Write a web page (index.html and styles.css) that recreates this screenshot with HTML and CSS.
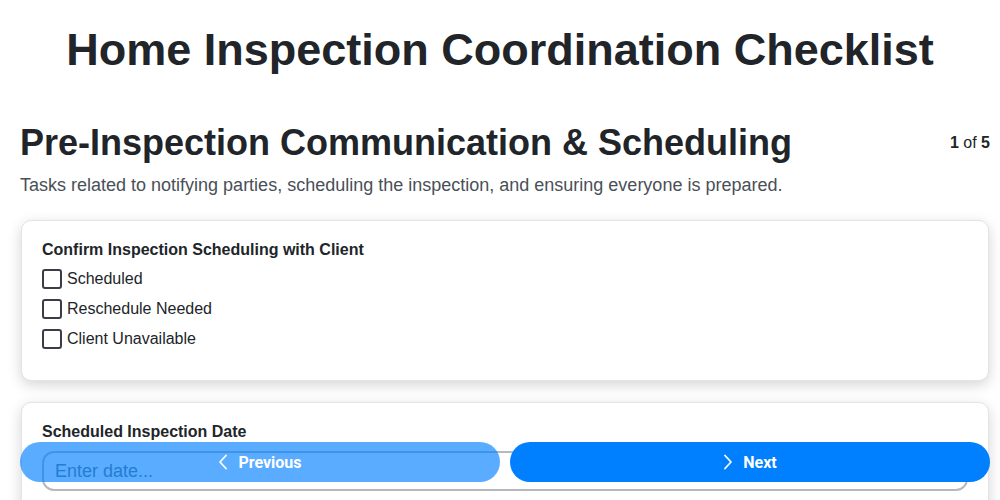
FILE: index.html
```html
<!DOCTYPE html>
<html lang="en">
<head>
<meta charset="utf-8">
<title>Home Inspection Coordination Checklist</title>
<link rel="stylesheet" href="styles.css">
</head>
<body>
<main class="page">
  <h1 class="page-title">Home Inspection Coordination Checklist</h1>
  <section class="section">
    <div class="section-head">
      <h2 class="section-title">Pre-Inspection Communication &amp; Scheduling</h2>
      <div class="step"><b>1</b> of <b>5</b></div>
    </div>
    <p class="section-desc">Tasks related to notifying parties, scheduling the inspection, and ensuring everyone is prepared.</p>

    <div class="card">
      <div class="card-label">Confirm Inspection Scheduling with Client</div>
      <label class="option"><span class="box"></span>Scheduled</label>
      <label class="option"><span class="box"></span>Reschedule Needed</label>
      <label class="option"><span class="box"></span>Client Unavailable</label>
    </div>

    <div class="card">
      <div class="card-label">Scheduled Inspection Date</div>
      <input class="text-input" type="text" placeholder="Enter date...">
    </div>
  </section>
</main>
<nav class="pager">
  <button class="btn btn-prev" type="button">
    <svg width="10" height="16" viewBox="0 0 10 16"><path d="M8 1.5 L2 8 L8 14.5" fill="none" stroke="currentColor" stroke-width="1.8" stroke-linecap="round" stroke-linejoin="round"/></svg>
    Previous
  </button>
  <button class="btn btn-next" type="button">
    <svg width="10" height="16" viewBox="0 0 10 16"><path d="M2 1.5 L8 8 L2 14.5" fill="none" stroke="currentColor" stroke-width="1.8" stroke-linecap="round" stroke-linejoin="round"/></svg>
    Next
  </button>
</nav>
</body>
</html>
```
FILE: styles.css
```css
* { box-sizing: border-box; }
body {
  margin: 0;
  background: #fff;
  color: #212529;
  font-family: "Liberation Sans", Arial, sans-serif;
}
.page {
  padding: 0 10px 0 20px;
}
.page-title {
  margin: 21px 10px 0 0;
  font-size: 45px;
  line-height: 58px;
  font-weight: 700;
  text-align: center;
}
.section-head {
  margin-top: 42px;
  display: flex;
  align-items: center;
  justify-content: space-between;
}
.section-title {
  margin: 0;
  font-size: 36px;
  line-height: 43px;
  font-weight: 700;
}
.step {
  font-size: 16px;
  color: #212529;
}
.section-desc {
  margin: 8px 0 21px;
  font-size: 18px;
  line-height: 27px;
  color: #495057;
}
.card {
  border: 1px solid #e3e3e8;
  border-radius: 10px;
  padding: 17px 20px 26px;
  margin: 0 1px 21px;
  background: #fff;
  box-shadow: 0 4px 14px rgba(0, 0, 0, 0.17);
}
.card-label {
  font-size: 16px;
  line-height: 24px;
  font-weight: 700;
  margin-bottom: 2px;
}
.option {
  display: flex;
  align-items: center;
  gap: 5px;
  height: 30px;
  font-size: 16px;
}
.box {
  width: 20px;
  height: 20px;
  border: 2px solid #3c3c48;
  border-radius: 3px;
}
.text-input {
  display: block;
  width: 100%;
  margin-top: 7px;
  height: 40px;
  border: 2px solid #b5b9be;
  border-radius: 12px;
  padding: 0 11px;
  font-family: "Liberation Sans", Arial, sans-serif;
  font-size: 18px;
  color: #212529;
}
.text-input::placeholder { color: #6c757d; }
.pager {
  position: fixed;
  left: 20px;
  right: 10px;
  bottom: 18px;
  display: flex;
  gap: 10px;
}
.btn {
  flex: 1;
  height: 40px;
  border: none;
  border-radius: 20px;
  background: #0080ff;
  color: #fff;
  font-family: Roboto, "Liberation Sans", sans-serif;
  font-size: 16px;
  font-weight: 700;
  display: flex;
  align-items: center;
  justify-content: center;
  gap: 10px;
}
.btn-prev { opacity: 0.65; }
```
